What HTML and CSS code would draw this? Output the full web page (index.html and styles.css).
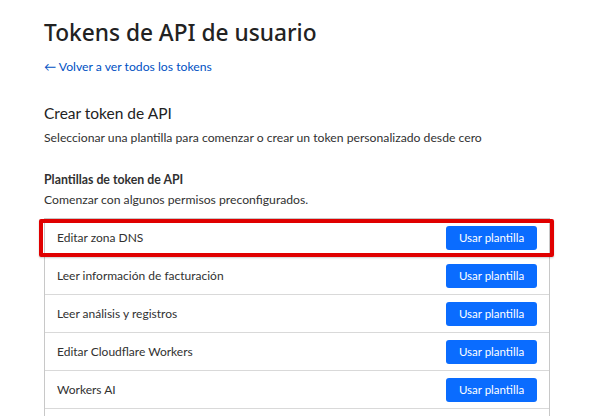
FILE: index.html
```html
<html>
<head>
    <link rel="stylesheet" href="styles.css">
</head>
<body>
    <div class="page">
        <h1>Tokens de API de usuario</h1>
        <a class="back" href="#">&larr; Volver a ver todos los tokens</a>

        <h2>Crear token de API</h2>
        <p class="lead">Seleccionar una plantilla para comenzar o crear un token personalizado desde cero</p>

        <h3>Plantillas de token de API</h3>
        <p class="lead">Comenzar con algunos permisos preconfigurados.</p>

        <ul class="templates">
            <li class="highlight">
                <span>Editar zona DNS</span>
                <button>Usar plantilla</button>
            </li>
            <li>
                <span>Leer información de facturación</span>
                <button>Usar plantilla</button>
            </li>
            <li>
                <span>Leer análisis y registros</span>
                <button>Usar plantilla</button>
            </li>
            <li>
                <span>Editar Cloudflare Workers</span>
                <button>Usar plantilla</button>
            </li>
            <li>
                <span>Workers AI</span>
                <button>Usar plantilla</button>
            </li>
            <li>
                <span>Leer miembros de la cuenta</span>
                <button>Usar plantilla</button>
            </li>
        </ul>
    </div>
</body>
</html>
```

FILE: styles.css
```css
body {
    margin: 0;
    font-family: Lato, "Noto Sans", sans-serif;
    color: #313131;
    background: #fff;
    overflow: hidden;
}
.page {
    width: 550px;
    height: 416px;
    padding: 17px 0 0 44px;
    box-sizing: border-box;
}
h1 {
    font-family: "Noto Sans", sans-serif;
    font-size: 22.7px;
    font-weight: 500;
    margin: 0;
    line-height: 32px;
    color: #222;
}
.back {
    display: block;
    margin-top: 10px;
    font-size: 12.2px;
    line-height: 16px;
    color: #0051c3;
    text-decoration: none;
}
h2 {
    font-size: 15.5px;
    font-weight: 400;
    margin: 27px 0 0;
    line-height: 22px;
    color: #222;
}
h3 {
    font-size: 12.3px;
    font-weight: 700;
    margin: 24px 0 0;
    line-height: 18px;
}
.lead {
    font-size: 12.2px;
    margin: 5px 0 0;
    line-height: 18px;
}
h3 + .lead {
    margin-top: 2px;
}
.templates {
    list-style: none;
    margin: 9px 0 0;
    padding: 0;
    border: 1px solid #c8c8c8;
    border-bottom: none;
}
.templates li {
    display: flex;
    align-items: center;
    justify-content: space-between;
    height: 37px;
    padding: 0 12px;
    border-bottom: 1px solid #d9d9d9;
    font-size: 12px;
}
.templates li.highlight {
    position: relative;
}
/* red annotation box drawn over the first row */
.templates li.highlight::after {
    content: "";
    position: absolute;
    top: 0;
    bottom: -1px;
    left: -6px;
    right: -5px;
    border: 4px solid #e00000;
    border-radius: 2px;
    box-shadow: 0 1px 2px rgba(0, 0, 0, 0.2);
}
.templates button {
    width: 91px;
    height: 24px;
    border: none;
    border-radius: 3px;
    background: #0a6cff;
    color: #fff;
    font-family: inherit;
    font-size: 11.5px;
    padding: 0;
}
```
